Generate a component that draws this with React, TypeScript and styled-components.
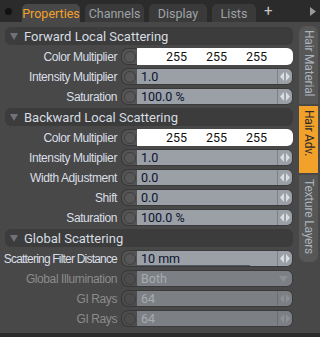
import React from 'react';
import styled, { createGlobalStyle } from 'styled-components';

const GlobalStyle = createGlobalStyle`
  html, body {
    margin: 0;
    padding: 0;
    background: #2b2b2b;
  }
  body {
    font-family: Roboto, 'Liberation Sans', Arial, sans-serif;
  }
`;

type RowKind = 'color' | 'number' | 'select';

interface IRow {
  label: string;
  value: string;
  kind: RowKind;
  disabled?: boolean;
  bar?: boolean;
  squeeze?: number;
}

interface ISection {
  title: string;
  rows: IRow[];
}

const sections: ISection[] = [
  {
    title: 'Forward Local Scattering',
    rows: [
      { label: 'Color Multiplier', value: '255', kind: 'color' },
      { label: 'Intensity Multiplier', value: '1.0', kind: 'number' },
      { label: 'Saturation', value: '100.0 %', kind: 'number' },
    ],
  },
  {
    title: 'Backward Local Scattering',
    rows: [
      { label: 'Color Multiplier', value: '255', kind: 'color' },
      { label: 'Intensity Multiplier', value: '1.0', kind: 'number' },
      { label: 'Width Adjustment', value: '0.0', kind: 'number' },
      { label: 'Shift', value: '0.0', kind: 'number' },
      { label: 'Saturation', value: '100.0 %', kind: 'number' },
    ],
  },
  {
    title: 'Global Scattering',
    rows: [
      {
        label: 'Scattering Filter Distance',
        value: '10 mm',
        kind: 'number',
        bar: true,
        squeeze: -0.8,
      },
      { label: 'Global Illumination', value: 'Both', kind: 'select', disabled: true },
      { label: 'GI Rays', value: '64', kind: 'number', disabled: true },
      { label: 'GI Rays', value: '64', kind: 'number', disabled: true },
    ],
  },
];

const topTabs = [
  { name: 'Properties', width: 58 },
  { name: 'Channels', width: 59 },
  { name: 'Display', width: 58 },
  { name: 'Lists', width: 44 },
];

const sideTabs = [
  { name: 'Hair Material', height: 78 },
  { name: 'Hair Adv.', height: 67 },
  { name: 'Texture Layers', height: 87 },
];

function Spinner({ disabled }: { disabled?: boolean }) {
  const c = disabled ? '#8d9196' : '#d8dde2';
  return (
    <SpinBox $disabled={disabled}>
      <svg width="10" height="9" viewBox="0 0 10 9">
        <polygon points="4,0 4,9 0,4.5" fill={c} />
        <polygon points="6,0 6,9 10,4.5" fill={c} />
      </svg>
    </SpinBox>
  );
}

function Row({ row }: { row: IRow }) {
  return (
    <RowWrap>
      <Label $disabled={row.disabled} $squeeze={row.squeeze ?? -0.4}>
        {row.label}
      </Label>
      <Knob $disabled={row.disabled} />
      {row.kind === 'color' && (
        <ColorField>
          <span>255</span>
          <span>255</span>
          <span>255</span>
        </ColorField>
      )}
      {row.kind === 'number' && (
        <Field $disabled={row.disabled}>
          <FieldText>{row.value}</FieldText>
          {row.bar && <Progress />}
          <Spinner disabled={row.disabled} />
        </Field>
      )}
      {row.kind === 'select' && (
        <Field $disabled={row.disabled}>
          <FieldText>{row.value}</FieldText>
          <Caret>
            <svg width="9" height="6" viewBox="0 0 9 6">
              <polygon points="0,0 9,0 4.5,6" fill="#8d9196" />
            </svg>
          </Caret>
        </Field>
      )}
    </RowWrap>
  );
}

function App() {
  return (
    <>
      <GlobalStyle />
      <Frame>
        <TabBar>
          <Dot />
          {topTabs.map((t, i) => (
            <TopTab key={t.name} $active={i === 0} $width={t.width}>
              {t.name}
            </TopTab>
          ))}
          <Plus>+</Plus>
          <Arrow>
            <svg width="6" height="9" viewBox="0 0 6 9">
              <polygon points="0,0 6,4.5 0,9" fill="#9a9a9a" />
            </svg>
          </Arrow>
        </TabBar>
        <Body>
          <Content>
            {sections.map((s) => (
              <Section key={s.title}>
                <Header>
                  <svg width="8" height="7" viewBox="0 0 8 7">
                    <polygon points="0,0 8,0 4,7" fill="#6f7378" />
                  </svg>
                  <span>{s.title}</span>
                </Header>
                {s.rows.map((r, i) => (
                  <Row key={i} row={r} />
                ))}
              </Section>
            ))}
          </Content>
          <SideStrip>
            {sideTabs.map((t, i) => (
              <SideTab
                key={t.name}
                $active={i === 1}
                $pos={i === 0 ? 'first' : i === sideTabs.length - 1 ? 'last' : 'mid'}
                $height={t.height}
              >
                {t.name}
              </SideTab>
            ))}
          </SideStrip>
        </Body>
      </Frame>
    </>
  );
}

export default App;

const Frame = styled.div`
  width: 320px;
  height: 337px;
  background: #2b2b2b;
  display: flex;
  flex-direction: column;
  overflow: hidden;
`;

const TabBar = styled.div`
  height: 22px;
  display: flex;
  align-items: flex-end;
  gap: 5px;
  padding-left: 4px;
`;

const Dot = styled.div`
  width: 7px;
  height: 7px;
  border-radius: 50%;
  background: #111;
  align-self: center;
  margin: 0 5px 0 1px;
`;

const TopTab = styled.div<{ $active: boolean; $width: number }>`
  width: ${(p) => p.$width}px;
  height: 18px;
  display: flex;
  align-items: center;
  justify-content: center;
  font-size: 12.5px;
  border-radius: 5px 5px 0 0;
  background: ${(p) => (p.$active ? '#484848' : '#3a3a3a')};
  color: ${(p) => (p.$active ? '#f4a22a' : '#9ea3a8')};
`;

const Plus = styled.div`
  color: #c8c8c8;
  font-size: 15px;
  height: 20px;
  line-height: 18px;
  margin-left: 3px;
`;

const Arrow = styled.div`
  margin-left: auto;
  margin-right: 4px;
  align-self: center;
  display: flex;
`;

const Body = styled.div`
  flex: 1;
  display: flex;
  background: #484848;
  border-bottom: 4px solid #2b2b2b;
`;

const Content = styled.div`
  width: 288px;
  padding: 5px 0 0 5px;
  display: flex;
  flex-direction: column;
  gap: 3px;
`;

const Section = styled.div`
  display: flex;
  flex-direction: column;
  gap: 3px;
`;

const Header = styled.div`
  height: 18px;
  border-radius: 6px;
  background: #3c3c3c;
  display: flex;
  align-items: center;
  gap: 6px;
  padding-left: 5px;
  color: #d6dce2;
  font-size: 13px;
`;

const RowWrap = styled.div`
  height: 17px;
  display: flex;
  align-items: stretch;
`;

const Label = styled.div<{ $disabled?: boolean; $squeeze: number }>`
  width: 112px;
  flex-shrink: 0;
  padding-right: 4px;
  display: flex;
  align-items: center;
  justify-content: flex-end;
  white-space: nowrap;
  font-family: 'Liberation Sans', Arial, sans-serif;
  font-size: 12px;
  letter-spacing: ${(p) => p.$squeeze}px;
  color: ${(p) => (p.$disabled ? '#8c8c8c' : '#dadfe5')};
`;

const Knob = styled.div<{ $disabled?: boolean }>`
  width: 16px;
  flex-shrink: 0;
  border-radius: 7px 0 0 7px;
  background: ${(p) => (p.$disabled ? '#4c4c4c' : '#545454')};
  border: 1px solid #383838;
  border-right: none;
  box-sizing: border-box;
  display: flex;
  align-items: center;
  justify-content: center;
  &::after {
    content: '';
    width: 10px;
    height: 10px;
    border-radius: 50%;
    border: 1px solid #3e3e3e;
    background: ${(p) => (p.$disabled ? '#4c4c4c' : '#585858')};
  }
`;

const ColorField = styled.div`
  flex: 1;
  background: #fff;
  border-radius: 0 6px 6px 0;
  display: flex;
  align-items: center;
  padding-left: 29px;
  font-size: 12.5px;
  color: #111;
  span {
    width: 40px;
  }
`;

const Field = styled.div<{ $disabled?: boolean }>`
  flex: 1;
  position: relative;
  display: flex;
  align-items: center;
  background: ${(p) => (p.$disabled ? '#7c8085' : '#9aa0a6')};
  color: ${(p) => (p.$disabled ? '#a6abb0' : '#0c1230')};
  border-radius: 0 6px 6px 0;
  border: 1px solid #3a3a3a;
  border-left: none;
  box-sizing: border-box;
  font-size: 12.5px;
`;

const FieldText = styled.span`
  flex: 1;
  padding-left: 4px;
`;

const Progress = styled.div`
  position: absolute;
  left: 0;
  bottom: 0;
  width: 113px;
  height: 1px;
  background: #555a60;
`;

const SpinBox = styled.div<{ $disabled?: boolean }>`
  width: 14px;
  height: 100%;
  border-left: 1px solid ${(p) => (p.$disabled ? '#6a6e73' : '#7a8086')};
  display: flex;
  align-items: center;
  justify-content: center;
`;

const Caret = styled.div`
  width: 18px;
  display: flex;
  align-items: center;
  justify-content: center;
`;

const SideStrip = styled.div`
  flex: 1;
  display: flex;
  flex-direction: column;
  padding: 4px 0 0 6px;
  gap: 2px;
`;

const SideTab = styled.div<{ $active: boolean; $pos: 'first' | 'mid' | 'last'; $height: number }>`
  width: 19px;
  height: ${(p) => p.$height}px;
  writing-mode: vertical-rl;
  font-size: 12px;
  letter-spacing: -0.2px;
  padding-top: 4px;
  white-space: nowrap;
  overflow: hidden;
  box-sizing: border-box;
  border-radius: ${(p) =>
    p.$pos === 'first' ? '7px 7px 0 0' : p.$pos === 'last' ? '0 0 7px 7px' : '0'};
  background: ${(p) => (p.$active ? '#f2a12a' : '#575757')};
  color: ${(p) => (p.$active ? '#2a2a2a' : '#aab2ba')};
  line-height: 19px;
`;
